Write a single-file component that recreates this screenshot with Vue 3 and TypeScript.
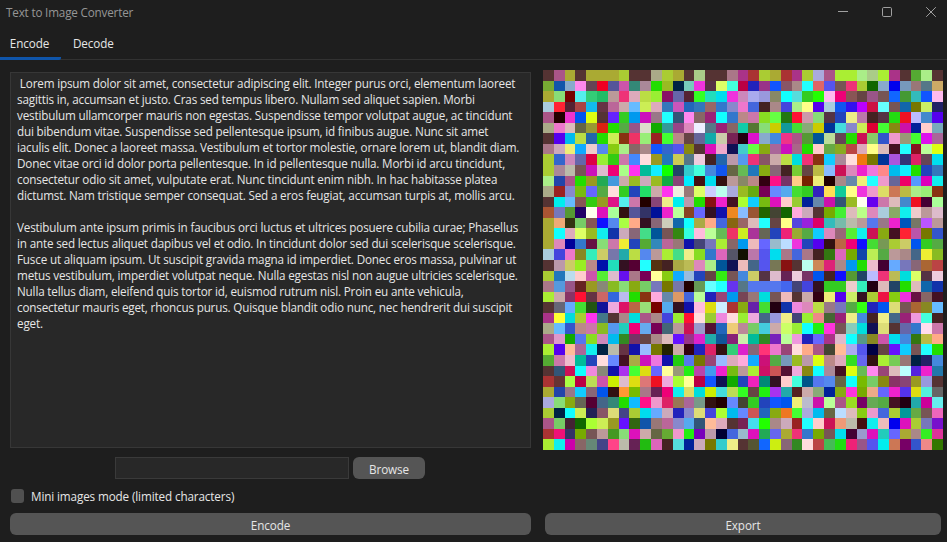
<script setup lang="ts">
import { ref } from 'vue'

const tabs = ['Encode', 'Decode']
const activeTab = ref('Encode')
const filePath = ref('')
const miniMode = ref(false)

const lines: string[] = [
  ' Lorem ipsum dolor sit amet, consectetur adipiscing elit. Integer purus orci, elementum laoreet',
  'sagittis in, accumsan et justo. Cras sed tempus libero. Nullam sed aliquet sapien. Morbi',
  'vestibulum ullamcorper mauris non egestas. Suspendisse tempor volutpat augue, ac tincidunt',
  'dui bibendum vitae. Suspendisse sed pellentesque ipsum, id finibus augue. Nunc sit amet',
  'iaculis elit. Donec a laoreet massa. Vestibulum et tortor molestie, ornare lorem ut, blandit diam.',
  'Donec vitae orci id dolor porta pellentesque. In id pellentesque nulla. Morbi id arcu tincidunt,',
  'consectetur odio sit amet, vulputate erat. Nunc tincidunt enim nibh. In hac habitasse platea',
  'dictumst. Nam tristique semper consequat. Sed a eros feugiat, accumsan turpis at, mollis arcu.',
  '',
  'Vestibulum ante ipsum primis in faucibus orci luctus et ultrices posuere cubilia curae; Phasellus',
  'in ante sed lectus aliquet dapibus vel et odio. In tincidunt dolor sed dui scelerisque scelerisque.',
  'Fusce ut aliquam ipsum. Ut suscipit gravida magna id imperdiet. Donec eros massa, pulvinar ut',
  'metus vestibulum, imperdiet volutpat neque. Nulla egestas nisl non augue ultricies scelerisque.',
  'Nulla tellus diam, eleifend quis tortor id, euismod rutrum nisl. Proin eu ante vehicula,',
  'consectetur mauris eget, rhoncus purus. Quisque blandit odio nunc, nec hendrerit dui suscipit',
  'eget.',
]

// Encoded output: one shorthand hex colour per pixel, 37 pixels per row.
const COLS = 37
const pixelRows: string[] = [
  '533 a58 aa3 533 aa3 aa3 aa3 ac3 533 533 aa8 ac3 aa3 533 ac8 533 533 a78 a38 a33 ac3 aa3 a33 a38 ac3 aad a58 ae3 ae3 ae8 ac8 ae3 a38 533 5a3 ae8 533',
  '7a3 15a 8ac f8e 645 e02 559 c5a 387 a89 2d0 9b2 024 7cb e3d 534 df6 4fd b04 22b 938 15f 856 a88 2ff d66 55e 755 e37 ac3 160 8ac 00e 79b 977 578 ca6',
  'aa3 8d7 700 5ee 3c7 2b6 b99 e37 dab bd4 9e3 816 66a 523 3f2 2db 0de e3d c8b aae 99d 886 1ff 5dd 3c2 2f0 fbe e07 855 644 958 755 16f 493 3bb 15f fbe',
  'acd f23 523 a44 1be 634 b69 caa 6bf ce5 dab 37b c5b 26b 37b 966 37c 88c e7c 46d 422 a88 44d ae8 ff8 50e acd 15e 31e b0f c14 6ff 755 16a 770 ce6 226',
  'a58 200 e3c 05e df1 533 62f 3c2 09e c1b 978 2ff 357 f8e 866 927 1ff 37c b88 c7a 8d2 6f4 271 f13 c9a 8d7 534 24b ee8 b7a 422 534 2d1 e12 bbf 48c 50e',
  'aa8 e7c dbb 664 993 d21 2d0 5a4 958 ddc 1a0 399 948 d8b eef 578 927 866 1ca 573 8d7 cc0 199 4d3 8a7 cc0 039 4dd 88c ce5 d03 4f3 881 c1a 029 fcc 7ab',
  '533 50e 0be bd4 26a 2d0 ce5 831 e36 9e7 922 4f3 b88 644 669 1aa cca 725 201 d1c 8ac 48d e38 a58 593 059 bd9 645 2d0 c15 8c6 35c e9c 997 4f3 d1e a69',
  'a78 cab ee7 1af ecc 58e 8c1 ae8 866 a88 15f 36c 55e 881 533 d1b eac 115 4cc 6f4 8a1 a69 c1b a68 2d0 fcc 6a4 8a2 b44 dab ff8 dbb 412 2ff 812 bf9 df1',
  'ac3 36c c8b 66a d04 9e3 3c1 c7a 48f fdd 992 27b cc5 578 ecd 422 26a b9a 59e e37 856 caa bd4 0dd e37 831 1cf a89 fdd e71 770 039 a5d 337 d26 645 0de',
  'ac3 a89 bba 755 c1b dbc e07 af8 f3e 0b9 1ef 1f0 246 3cc 4fd 48d 15e 664 6b5 27b 8a1 867 422 7c3 644 bb4 8bf c15 d8b e2c e7d f88 0be 1ef 2d0 24b 37b',
  'ae8 24a a58 2d0 992 2a5 49d caa 9b2 cab 9b2 1a4 847 0ef 411 0de 311 b99 886 b88 301 f18 736 fc8 720 ee7 200 a88 68a ee7 2ff e9c 669 e06 59f d0b 1ee',
  'aa8 922 88c 7b1 66f 5a4 fdd 3c2 24b 2d6 caa f3e eed 977 df6 ccf bfe aad 9b2 6a1 705 68f 5ae 4d3 3c2 32b fd5 1c9 ff8 e3d e9c dd6 c75 bb4 ae8 9e7 831',
  '533 0ee 6bf 855 3c1 992 d18 5ee c7a 200 847 ee8 0ee b9a 2d0 811 e2c 412 af3 1cf 7b1 d1b fcc 9c3 029 68a c1a 357 9b2 ffe 60e c7a dbb 48c e12 403 af9',
  'a53 77b 593 206 ffe d1b af9 311 559 336 019 e2c bf9 842 66f 312 11a e82 8bf 953 260 443 160 fad cab 533 7a0 4e3 dbb bf8 d8b acd 8a6 1ee ecc b99 dbc',
  'aa3 ea7 331 7c6 855 11f 58e af4 fa8 312 867 ccb 16a 1ff aa4 fa8 46d 861 966 dbb 2ff 644 ff8 54d 92d d06 3bb 7ba bba b99 57e 978 e2c 05b 776 b5f b99',
  'aa3 1ff dab df6 9b2 1ee 13a cab 867 4d8 059 755 381 3fd fbd bf9 6b5 e36 ce2 a39 665 24b e27 9a3 5a4 1cf d8b 967 5e3 1ee c15 8a1 412 f23 b5a 770 35c',
  'aa3 d8b 009 37c 614 8d7 c7a ee3 24b 5a3 38b b69 977 11a 447 77b ae3 866 09e ebb 66f 9bc bdf e3d 24b 50e 311 b64 e07 11f 4d3 795 ac3 cc6 05e 3c2 5a4',
  'acd 44d e7c 882 3eb cc6 77a 2aa bd4 58e b99 ae3 4d8 ee8 8d2 37c d6b 556 110 b7a 55e 0de a78 46d a78 422 371 d6b 7a0 14a be5 5a4 b99 a88 468 ee3 8b2',
  '533 b9a cc6 9e2 b88 01a 2db 312 503 2ff 531 422 aa4 bb5 d8b ae8 059 115 ebb 468 55e 775 811 533 bfe c85 d27 a88 09e 2d0 ebc 403 6af 77b 867 a63 b44',
  'ac3 27b bde fcc c5a 5e3 dbc 61e a78 705 ff9 8c1 1af 9bd 24b 644 3e1 755 48d cc6 534 dbc 625 ecd 736 05e 422 11f 593 246 bbf e37 bb5 0dd df6 534 ecd',
  'a78 59d 958 622 992 887 8b2 8d7 8a1 7c6 77b 770 77a 200 695 6ff 2ff 63e 578 57e 57e 57e 46e 447 44d 312 3c2 3c2 ecc 3eb 201 dbb 246 2d0 dbb 16a 13a',
  'ae3 caa 836 f13 634 c66 36d bbe 2d0 831 fad 68a d96 46d bf9 22b 947 09e 745 977 0dd 755 ebb 533 caa 301 ee7 50e ce6 312 ac3 e14 8c1 e3d 614 866 412',
  '533 667 6af 4d3 251 119 ead d16 b64 9d7 700 5ae 312 11a fbd dd1 cef a33 8a1 62a 4d3 201 13a e8d d8b bd4 978 77b 5a4 3f1 22b 05e dd7 755 a63 882 6bf',
  'a38 ff3 0dd ac3 f3e 478 533 a88 0dd a58 a88 44d 9e3 f13 fdd 9c3 e8d fdd 9e3 ead 468 99d ee8 447 9e3 e88 463 927 ee8 48d 422 ee8 468 927 e9d 4fd 422',
  'aa8 6bf 35c b88 c7a 8b2 59e 2cb e07 6ae 705 467 b99 c15 99c 513 26b ec7 b89 7c6 4cd caa cf6 9e3 1ff 2e1 f3d 755 8cb 0dd 115 dd7 533 66a 37c fde c7a',
  'a58 d9c 1a0 57e 8d2 c8b 0be 382 736 644 a88 dbb 61f 938 d2c 2aa 159 827 cea 0b9 382 72b bf9 e9d 22b 66f a38 dbc 1ff 598 882 c5a 0de 48d 371 bb4 fa8',
  'ae3 50e fb9 a69 1ee 024 bba 634 11a 9bf 770 220 caa 301 22b d26 311 3c7 d2c 867 f37 e7c 947 fdd fa8 a58 443 fb9 aae 55e 004 644 61f 1cf 755 2ff 2d0',
  '5a3 c7a ebc 0b9 24b fdd 68f 412 aa4 c1b e7d 11a 2c1 57e 770 947 9bf dab fad 1af c17 5a4 79b 9b2 b9a df1 b88 dab 3d2 66e 311 ae3 7c5 977 024 226 48d',
  '533 357 c15 1ff e8d 887 11a a3e 4f3 dd1 66f ff9 997 2e1 b4a 49e e2c 7b1 b99 ae3 c16 c55 513 ead 881 1ff a89 412 df1 6b5 f8e 947 dbb bff 52d e2c 27a',
  'a33 633 af4 b04 bd5 c5a ce0 dbc dd1 d77 e12 ead af3 ff9 b04 15f 115 1a0 24b e2b 087 312 fcc 4fd 058 57e 58e 664 1ff 7b0 7c6 881 836 847 992 99d 533',
  'aa3 24a 978 1cf 867 05e 311 f93 7b0 a78 625 e07 1ee dd6 0dd ce0 4dd bd5 3f2 644 2e1 a3e 2aa 522 caa 8a7 029 8a1 f3d 7a0 ea8 66f e2c 53e dd1 5ed 666',
  'aad 8d7 8a1 665 503 468 387 2d0 1bf f18 e9c d26 975 a69 798 311 200 68f 443 3c2 24b 15f 05e ee7 bbc c1a bf9 a58 9d2 706 6a5 5a4 412 201 2aa c09 6ee',
  'ac3 024 1ff ce5 225 856 dd7 448 ac3 0de 6af cab 22b 88c dd7 44d af3 0be 68f c55 26b 8a1 e72 4f3 aad 0be 664 bdf dbb 8c1 e9c 46d ac3 099 6a4 755 e6b',
  'a58 7c6 423 160 af3 ce5 992 61f 361 15a 977 b69 88c 5ae 357 fb9 dab 533 725 4de 2f0 a88 cab 922 2ff fcc c15 e97 bba 411 1ee ebb 00e d1b ac3 77b 71c',
  'a33 e17 336 7a0 755 b99 492 8d7 d1b caa 664 6a3 e9c 2e1 70b b9a 003 46d 9bc d1b 2a5 66e aa3 e37 37c 7a0 755 0de 403 99c d1b 2cb 66f aa3 a88 3e2 d39',
  'ae3 1ee c0a 866 687 448 f48 bba 625 2b1 d6b 422 5dd 029 cab 770 3cc ee8 533 553 16f ce1 867 382 fdd b44 4b5 2d1 e27 958 55e 0ee c75 706 35c e88 370',
]
const pixels: string[][] = pixelRows.map((row) => row.split(' '))
</script>

<template>
  <div class="window">
    <header class="titlebar">
      <span class="title">Text to Image Converter</span>
      <div class="controls">
        <svg width="12" height="12" viewBox="0 0 12 12"><path d="M1 5.5H11" /></svg>
        <svg width="12" height="12" viewBox="0 0 12 12"><rect x="1.5" y="1.5" width="9" height="9" rx="1.2" /></svg>
        <svg width="12" height="12" viewBox="0 0 12 12"><path d="M1.2 1.2L10.8 10.8M10.8 1.2L1.2 10.8" /></svg>
      </div>
    </header>
    <nav class="tabs">
      <button
        v-for="tab in tabs"
        :key="tab"
        class="tab"
        :class="{ active: tab === activeTab }"
        @click="activeTab = tab"
      >{{ tab }}</button>
    </nav>
    <main class="content">
      <section class="left">
        <div class="editor">
          <div v-for="(line, i) in lines" :key="i" class="line">{{ line }}</div>
        </div>
        <div class="file-row">
          <input v-model="filePath" class="path" type="text" />
          <button class="btn browse">Browse</button>
        </div>
        <label class="check">
          <input v-model="miniMode" type="checkbox" class="box" />
          <span>Mini images mode (limited characters)</span>
        </label>
        <button class="btn">Encode</button>
      </section>
      <section class="right">
        <svg class="preview" :viewBox="`0 0 ${COLS} ${pixels.length}`" preserveAspectRatio="none" shape-rendering="crispEdges">
          <template v-for="(row, y) in pixels" :key="y">
            <rect v-for="(c, x) in row" :key="x" :x="x" :y="y" width="1" height="1" :fill="'#' + c" />
          </template>
        </svg>
        <button class="btn export">Export</button>
      </section>
    </main>
  </div>
</template>

<style>
body {
  background: #1e1e1e;
}
</style>

<style scoped>
.window {
  width: 947px;
  height: 542px;
  box-sizing: border-box;
  display: flex;
  flex-direction: column;
  background: #1e1e1e;
  color: #e6e6e6;
  font-family: 'Open Sans', 'Noto Sans', sans-serif;
  font-size: 11.7px;
  letter-spacing: -0.12px;
  overflow: hidden;
}
button,
input {
  font: inherit;
  letter-spacing: inherit;
  color: inherit;
  margin: 0;
  box-sizing: border-box;
}
.titlebar {
  height: 28px;
  display: flex;
  justify-content: space-between;
  flex: none;
  padding: 0 10px 0 6px;
  box-sizing: border-box;
}
.title {
  line-height: 25px;
  letter-spacing: -0.18px;
  color: #969696;
}
.controls {
  display: flex;
  gap: 32px;
  padding-top: 6px;
}
.controls svg {
  fill: none;
  stroke: #a0a0a0;
  stroke-width: 1;
}
.tabs {
  display: flex;
  flex: none;
  height: 32px;
  box-sizing: border-box;
  border-bottom: 1px solid #323232;
}
.tab {
  height: 32px;
  padding: 2px 12px 0;
  border: 0;
  border-bottom: 3px solid transparent;
  background: none;
  line-height: 27px;
}
.tab.active {
  width: 61px;
  padding: 2px 2px 0 0;
  border-bottom-color: #0f55aa;
  border-bottom-right-radius: 2px;
}
.content {
  display: flex;
  flex: 1;
  gap: 12px;
  padding: 10px 4px 7px 10px;
}
.left {
  width: 521px;
  display: flex;
  flex-direction: column;
  padding-top: 2px;
}
.editor {
  height: 376px;
  box-sizing: border-box;
  padding: 2px 6px;
  border: 1px solid #373737;
  background: #282828;
  letter-spacing: -0.175px;
}
.line {
  height: 16px;
  line-height: 16px;
  white-space: pre;
}
.file-row {
  display: flex;
  gap: 4px;
  margin: 9px 0 0 105px;
}
.path {
  width: 234px;
  height: 22px;
  padding: 0 4px;
  border: 1px solid #3a3a3a;
  background: #282828;
  outline: none;
}
.btn {
  height: 22px;
  padding: 1px 0 0;
  border: 0;
  border-radius: 6px;
  background: #555;
  line-height: 20px;
}
.browse {
  width: 72px;
}
.check {
  display: flex;
  align-items: center;
  gap: 7px;
  height: 18px;
  margin: 8px 0 8px 1px;
}
.box {
  appearance: none;
  width: 13px;
  height: 14px;
  border-radius: 3px;
  background: #505050;
}
.right {
  width: 400px;
  display: flex;
  flex-direction: column;
}
.preview {
  width: 400px;
  height: 380px;
  display: block;
}
.export {
  width: 396px;
  margin: 63px 0 0 2px;
}
</style>
